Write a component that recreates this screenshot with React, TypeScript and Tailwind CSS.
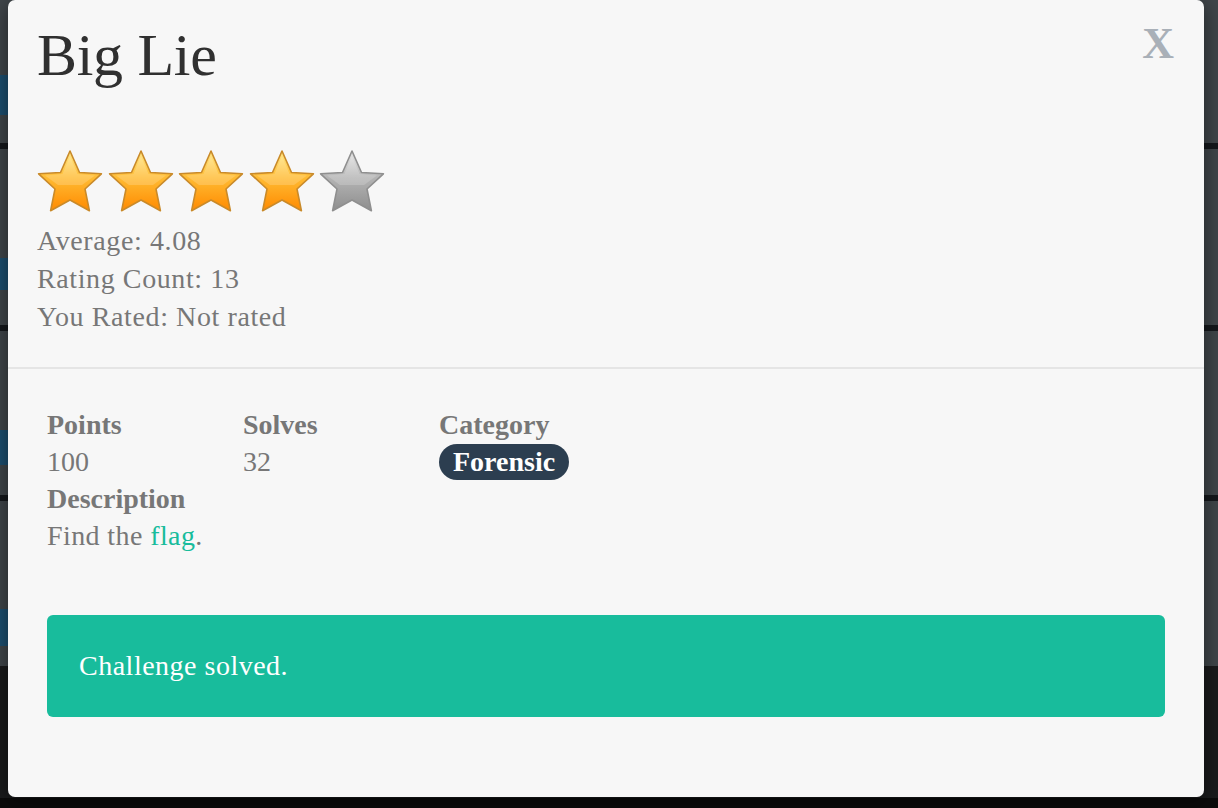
import React from "react";

const serif = { fontFamily: '"Liberation Serif", "Times New Roman", serif' };

const Star = ({ on, id }: { on: boolean; id: string }) => (
  <svg width="66" height="66" viewBox="0 0 66 66">
    <defs>
      <linearGradient id={id} x1="0" y1="0" x2="0" y2="1">
        {on ? (
          <>
            <stop offset="0" stopColor="#ffe888" />
            <stop offset="0.45" stopColor="#ffbb33" />
            <stop offset="1" stopColor="#ff8a00" />
          </>
        ) : (
          <>
            <stop offset="0" stopColor="#e6e6e6" />
            <stop offset="0.45" stopColor="#b4b4b4" />
            <stop offset="1" stopColor="#8e8e8e" />
          </>
        )}
      </linearGradient>
    </defs>
    <polygon
      points="33,3 42.5,24.5 64.4,25.8 48,41 52.4,62.7 33,52 13.6,62.7 18,41 1.6,25.8 23.5,24.5"
      fill={`url(#${id})`}
      stroke={on ? "#c98a2a" : "#8f8f8f"}
      strokeWidth="1.6"
      strokeLinejoin="round"
    />
    <polygon
      points="33,8 40.5,26 58,27.5 45,37 21,37 8,27.5 25.5,26"
      fill="#ffffff"
      opacity="0.18"
    />
  </svg>
);

const bands = [
  { h: "h-[143px]", blueTop: "mt-[75px]", blueH: "h-[40px]" },
  { h: "h-[176px]", blueTop: "mt-[109px]", blueH: "h-[32px]" },
  { h: "h-[164px]", blueTop: "mt-[99px]", blueH: "h-[35px]" },
  { h: "h-[165px]", blueTop: "mt-[108px]", blueH: "h-[37px]" },
];

export default function App() {
  return (
    <div className="relative w-[1218px] h-[808px] overflow-hidden bg-[#0b0b0b]" style={serif}>
      {/* page behind the overlay */}
      <div className="flex flex-col">
        {bands.map((b, i) => (
          <div key={i} className="flex flex-col">
            <div className={`${b.h} bg-[#40464a]`}>
              <div className={`${b.blueTop} ${b.blueH} w-[30px] bg-[#1d4f70]`} />
            </div>
            {i < 3 && <div className="h-[6px] bg-[#15181c]" />}
          </div>
        ))}
        <div className="h-[132px] bg-[#1a1b1c]" />
      </div>

      {/* modal */}
      <div className="absolute left-[8px] top-0 w-[1196px] h-[797px] rounded-[7px] bg-[#f7f7f7] shadow-[0_4px_20px_rgba(0,0,0,0.5)]">
        <button className="absolute right-[30px] top-[22px] text-[44px] leading-none font-bold text-[#a9b0b8]">
          X
        </button>

        <div className="px-[29px] pt-[22px] pb-[31px]">
          <h1 className="text-[60px] leading-[66px] text-[#303030] tracking-[-0.3px]">Big Lie</h1>
          <div className="mt-[60px] flex gap-[4.5px]">
            <Star on id="s1" />
            <Star on id="s2" />
            <Star on id="s3" />
            <Star on id="s4" />
            <Star on={false} id="s5" />
          </div>
          <div className="mt-[8px] text-[28px] leading-[38px] tracking-[0.6px] text-[#777777]">
            <p>Average: 4.08</p>
            <p>Rating Count: 13</p>
            <p>You Rated: Not rated</p>
          </div>
        </div>

        <div className="h-[2px] bg-[#e5e5e5]" />

        <div className="px-[39px] pt-[37px] text-[28px] leading-[37px] text-[#777777]">
          <div className="grid grid-cols-[196px_196px_196px]">
            <div>
              <p className="font-bold">Points</p>
              <p>100</p>
            </div>
            <div>
              <p className="font-bold">Solves</p>
              <p>32</p>
            </div>
            <div>
              <p className="font-bold">Category</p>
              <span className="inline-flex h-[36px] items-center rounded-full bg-[#2c3e50] px-[14px] font-bold text-white">
                Forensic
              </span>
            </div>
          </div>
          <p className="font-bold">Description</p>
          <p className="tracking-[0.4px]">
            Find the <span className="text-[#18bc9c]">flag</span>.
          </p>

          <div className="mt-[61px] rounded-[6px] bg-[#18bc9c] px-[32px] py-[32px] text-white leading-[38px] tracking-[0.5px]">
            Challenge solved.
          </div>
        </div>
      </div>
    </div>
  );
}
